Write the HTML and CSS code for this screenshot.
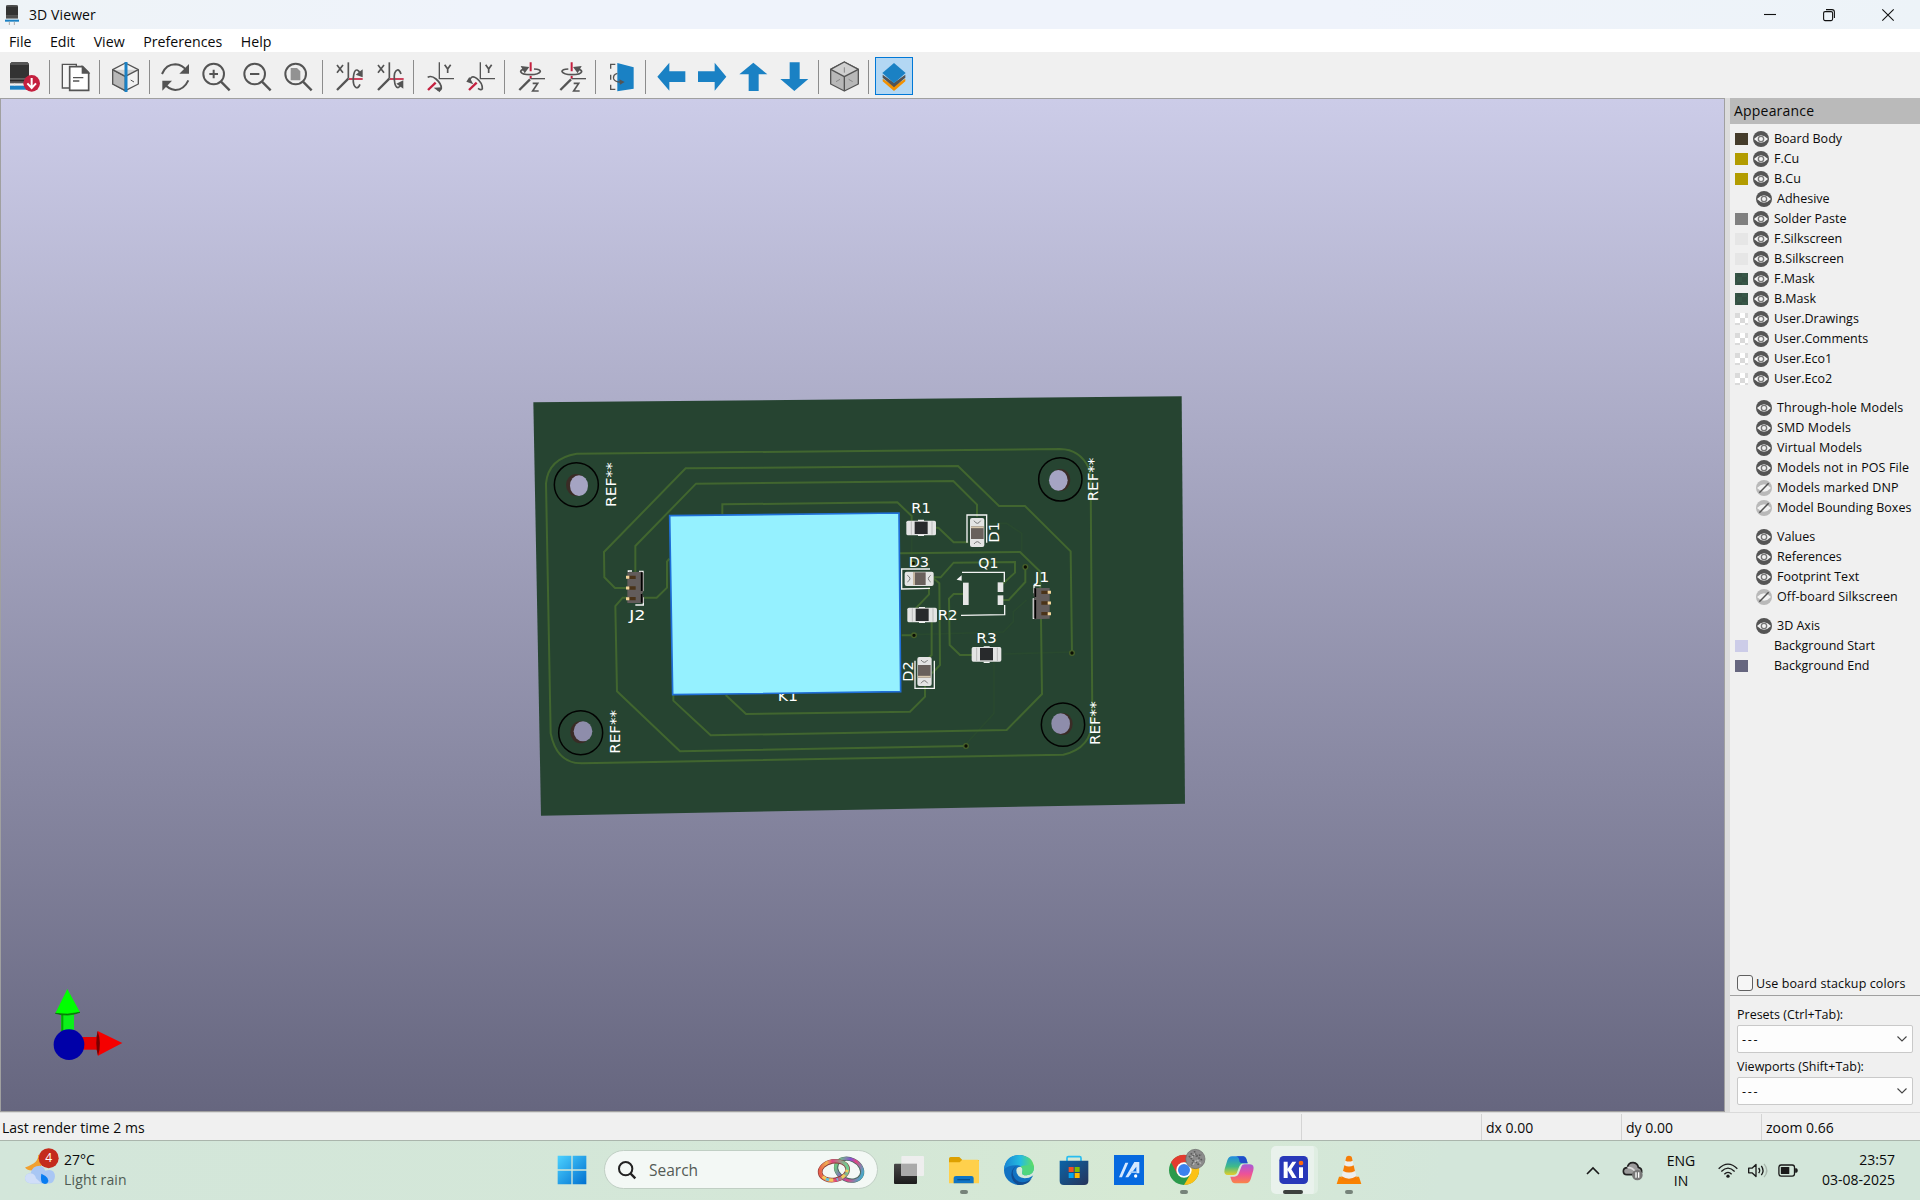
FILE: index.html
```html
<!DOCTYPE html>
<html lang="en">
<head>
<meta charset="utf-8">
<title>3D Viewer</title>
<link rel="stylesheet" href="styles.css">
</head>
<body>
<svg class="defs" width="0" height="0">
  <symbol id="eye" viewBox="0 0 48 48"><circle cx="24" cy="24" r="24" fill="#545454"/><path d="M3 24Q24 2 45 24Q24 46 3 24Z" fill="#f2f2f2"/><circle cx="24" cy="24" r="8" fill="#f2f2f2" stroke="#777" stroke-width="4"/></symbol>
  <symbol id="off" viewBox="0 0 48 48"><circle cx="24" cy="24" r="24" fill="#b9b9b9"/><path d="M3 24Q24 2 45 24Q24 46 3 24Z" fill="#f2f2f2"/><path d="M10 38L38 10" stroke="#545454" stroke-width="4.5"/></symbol>
  <symbol id="lens" viewBox="0 0 90 90"><circle cx="38" cy="36" r="31" fill="none" stroke="#545454" stroke-width="6"/><path d="M60 59L86 85" stroke="#545454" stroke-width="7"/></symbol>
</svg>
<header class="title">
  <svg class="app" viewBox="0 0 42 60"><path d="M3 4Q3 0 21 0T39 4V36H3Z" fill="#333"/><path d="M4 1H38V5H4Z" fill="#555"/><path d="M3 31H39V41H3Z" fill="#666"/><path d="M3 36H39" stroke="#222" stroke-width="2"/><path d="M0 44H42V50H0Z" fill="#1a81c4"/><path d="M13 50V60M28 50V60" stroke="#aaa" stroke-width="3"/></svg>
  <span class="name">3D Viewer</span>
  <div class="winbtns">
    <svg viewBox="0 0 12 12"><path d="M0 5.5H12"/></svg>
    <svg viewBox="0 0 12 12"><rect x=".6" y="2.6" width="9" height="9" rx="1.5"/><path d="M3 .6H9Q11.4 .6 11.4 3V9"/></svg>
    <svg viewBox="0 0 12 12"><path d="M.3 .3L11.7 11.7M11.7 .3L.3 11.7"/></svg>
  </div>
</header>
<nav class="menu"><span>File</span><span>Edit</span><span>View</span><span>Preferences</span><span>Help</span></nav>
<div class="toolbar">
  <div class="tool"><svg viewBox="0 0 90 90"><path d="M0 5Q0 0 28 0T57 5V50H0Z" fill="#333"/><path d="M4 0H53L57 9H0Z" fill="#555"/><path d="M0 51H50V64H0Z" fill="#555"/><path d="M0 56H50" stroke="#222" stroke-width="3"/><path d="M0 71H48V83H0Z" fill="#1a81c4"/><path d="M14 64V71M40 64V71" stroke="#ddd" stroke-width="3"/><circle cx="65" cy="64" r="25" fill="#c4203f"/><path d="M65 48V76M52 64L65 78L78 64" fill="none" stroke="#fff" stroke-width="6"/></svg></div>
  <i></i>
  <div class="tool"><svg viewBox="0 0 90 90" fill="#f5f5f5" stroke="#545454" stroke-width="4"><path d="M7 7H49V78H7Z"/><path d="M29 14H68L86 32V85H29Z" fill="#fff" stroke-width="5"/><path d="M67 14V33H86Z" fill="#545454"/><path d="M39 47H70M39 57H58" fill="none"/></svg></div>
  <i></i>
  <div class="tool"><svg viewBox="0 0 90 90" stroke="#545454" stroke-width="4" stroke-linejoin="round"><path d="M46 3L85 23V66L46 86L8 66V23Z" fill="#f2f2f2"/><path d="M8 23L46 43V86L8 66Z" fill="#b8b8b8"/><path d="M8 23L46 43L85 23" fill="#d2d2d2"/><path d="M62 54L72 60" stroke-width="3"/><path d="M48 0V90" stroke="#1a81c4" stroke-width="9"/></svg></div>
  <i></i>
  <div class="tool"><svg viewBox="0 0 90 90" fill="none" stroke="#545454" stroke-width="6"><path d="M6 36Q18 7 46 7Q68 8 80 27"/><path d="M87 6V35H58Z" fill="#545454" stroke="none"/><path d="M85 55Q72 83 46 84Q24 81 13 64"/><path d="M7 86V56H36Z" fill="#545454" stroke="none"/></svg></div>
  <div class="tool"><svg viewBox="0 0 90 90"><use href="#lens"/><path d="M38 23V49M25 36H51" stroke="#545454" stroke-width="6"/></svg></div>
  <div class="tool"><svg viewBox="0 0 90 90"><use href="#lens"/><path d="M24 36H52" stroke="#545454" stroke-width="6"/></svg></div>
  <div class="tool"><svg viewBox="0 0 90 90"><use href="#lens"/><path d="M23 18H42L52 28V55H23Z" fill="#929292"/></svg></div>
  <i></i>
  <div class="tool"><svg class="rot" viewBox="0 0 90 90"><path d="M12 9L30 32M30 9L12 32" stroke-width="5"/><path d="M46 1V50" stroke-width="5"/><path class="red" d="M48 51H89"/><path d="M46 50L12 84" stroke-width="7"/><path d="M81 67Q76 79 70 77Q59 72 61 47Q63 23 72 24Q78 25 81 35"/><path class="fill" d="M89 22V46L68 38Z"/></svg></div>
  <div class="tool"><svg class="rot" viewBox="0 0 90 90"><path d="M12 9L30 32M30 9L12 32" stroke-width="5"/><path d="M46 1V50" stroke-width="5"/><path class="red" d="M48 51H89"/><path d="M46 50L12 84" stroke-width="7"/><path d="M81 36Q76 22 70 24Q59 28 61 53Q63 77 72 77Q78 76 81 67"/><path class="fill" d="M88 80V55L67 65Z"/></svg></div>
  <i></i>
  <div class="tool"><svg class="rot" viewBox="0 0 90 90"><path d="M62 8L71 21L80 8M71 20V33" stroke-width="5"/><path d="M46 1V50H90" stroke-width="4"/><path class="red" d="M12 84L35 62" stroke-width="7"/><path d="M11 46Q22 39 36 51Q53 66 52 79Q50 87 41 84"/><path class="fill" d="M29 77L54 76L47 91Z"/></svg></div>
  <div class="tool"><svg class="rot" viewBox="0 0 90 90"><path d="M62 8L71 21L80 8M71 20V33" stroke-width="5"/><path d="M46 1V50H90" stroke-width="4"/><path class="red" d="M12 84L35 62" stroke-width="7"/><path d="M13 58Q18 37 35 49Q53 63 52 80Q48 86 39 79"/><path class="fill" d="M4 59L13 45L25 67Z"/></svg></div>
  <i></i>
  <div class="tool"><svg class="rot" viewBox="0 0 90 90"><path d="M53 64H68L53 87H71" stroke-width="5"/><path class="red" d="M47 1V28M47 42V50" stroke-width="6"/><path d="M47 50H90" stroke-width="4"/><path d="M45 52L13 84" stroke-width="7"/><path d="M57 21Q77 22 76 29Q71 38 47 38Q20 38 17 29Q17 23 28 22"/><path class="fill" d="M17 12L43 15L29 34Z"/></svg></div>
  <div class="tool"><svg class="rot" viewBox="0 0 90 90"><path d="M53 64H68L53 87H71" stroke-width="5"/><path class="red" d="M47 1V28M47 42V50" stroke-width="6"/><path d="M47 50H90" stroke-width="4"/><path d="M45 52L13 84" stroke-width="7"/><path d="M37 21Q17 22 18 29Q23 38 47 38Q74 38 77 29Q77 23 66 22"/><path class="fill" d="M77 12L51 15L65 34Z"/></svg></div>
  <i></i>
  <div class="tool"><svg class="rot" viewBox="0 0 90 90"><path d="M28 7H14V20M14 38V53M14 68V82H28" stroke-width="4"/><path d="M34 3L83 16V80L34 88Z" fill="#1a81c4" stroke="none"/><path d="M34 34Q20 38 23 51Q28 60 42 60" stroke-width="4"/><path class="fill" d="M40 52L56 60L42 68Z"/></svg></div>
  <i></i>
  <div class="tool"><svg class="arrow" viewBox="0 0 90 90"><path d="M4 44L40 2V28H88V60H40V86Z"/></svg></div>
  <div class="tool"><svg class="arrow" viewBox="0 0 90 90"><path d="M88 44L53 2V28H3V60H53V86Z"/></svg></div>
  <div class="tool"><svg class="arrow" viewBox="0 0 90 90"><path d="M46 2L88 37H62V87H32V37H4Z"/></svg></div>
  <div class="tool"><svg class="arrow" viewBox="0 0 90 90"><path d="M46 87L88 51H62V1H32V51H4Z"/></svg></div>
  <i></i>
  <div class="tool"><svg viewBox="0 0 90 90" stroke="#545454" stroke-width="4" stroke-linejoin="round"><path d="M46 0L88 22V66L46 87L5 66V22Z" fill="#b8b8b8"/><path d="M5 22L46 0L88 22L46 44Z" fill="#d0d0d0"/><path d="M46 44V87"/><path d="M46 16V32M21 59L33 52M71 59L59 52" stroke="#888" stroke-width="3"/></svg></div>
  <i></i>
  <div class="tool active"><svg viewBox="0 0 90 90"><path d="M11 50L45 72L79 50V58L45 87L11 58Z" fill="#f29100"/><path d="M11 38L45 62L79 38V47L45 76L11 47Z" fill="#545454"/><path d="M45 3L80 33L45 64L10 33Z" fill="#1a81c4"/></svg></div>
</div>
<main>
  <section class="canvas">
    <svg viewBox="1 99 1723 1012" width="1723" height="1012">
      <g transform="translate(520 380) scale(.33333)">
        <path d="M40 67L1985 49L1995 1271L63 1307Z" fill="#264431"/>
        <g class="faint"><path d="M1422 845V1000L1338 1092M1450 822L1656 816M1180 764L1450 756L1480 725V695L1520 660M1410 430H1460L1505 460V520M1175 470V560"/></g>
        <g class="track">
          <path d="M170 221L1620 207Q1680 208 1707 265Q1712 280 1712 300L1717 1020Q1715 1105 1630 1124L185 1150Q110 1150 92 1060L78 310Q85 235 170 221Z"/>
          <path d="M323 624H285L253 592L252 516L497 265L1314 258L1437 378H1515L1652 514L1656 819"/>
          <path d="M346 576V498L528 311L1300 303L1371 374V410"/>
          <path d="M607 402V373L1132 367L1175 408V425"/>
          <path d="M368 653H410L441 623V545L448 536"/>
          <path d="M323 653H308L286 678L291 934L480 1114L1338 1098"/>
          <path d="M460 945V962L572 1066L1460 1050L1566 942L1563 715"/>
          <path d="M617 945L678 1002L1170 995L1215 950V915"/>
          <path d="M1245 443H1255L1301 487H1345"/>
          <path d="M1140 520L1500 516L1561 575V625"/>
          <path d="M1240 592H1262L1301 548L1485 546V578L1445 614"/>
          <path d="M1516 561V606L1466 660H1445"/>
          <path d="M1330 642H1301L1287 656L1289 795L1320 825H1360"/>
          <path d="M1240 595L1258 610L1260 855L1236 880"/>
          <path d="M1227 622V643L1187 685M1235 720V825L1225 835M1145 766H1180"/>
        </g>
        <g fill="#0c0e04" stroke="#47602a" stroke-width="4"><circle cx="1516" cy="561" r="7"/><circle cx="1656" cy="819" r="7"/><circle cx="1338" cy="1098" r="7"/><circle cx="1182" cy="766" r="7"/><circle cx="1180" cy="550" r="7"/></g>
        <g class="ring"><circle cx="169" cy="314" r="66"/><circle cx="182" cy="1058" r="66"/><circle cx="1621" cy="298" r="65"/><circle cx="1629" cy="1034" r="65"/></g>
        <g fill="#3a2c26"><ellipse cx="169" cy="315" rx="31" ry="33"/><ellipse cx="181" cy="1057" rx="30" ry="33"/><ellipse cx="1621" cy="300" rx="30" ry="33"/><ellipse cx="1628" cy="1032" rx="30" ry="33"/></g>
        <g fill="#a5a4c3"><ellipse cx="177" cy="317" rx="27" ry="31"/><ellipse cx="1615" cy="301" rx="28" ry="31"/></g>
        <g fill="#8e8dab"><ellipse cx="189" cy="1054" rx="28" ry="30"/><ellipse cx="1622" cy="1031" rx="28" ry="31"/></g>
        <g class="silk">
          <path d="M325 576V573H336M357 574H369V633M370 652V675H346"/>
          <path d="M1341 488V405H1400V488"/>
          <path d="M1230 567H1145V627L1230 625"/>
          <path d="M1185 842V925H1243V842"/>
          <path d="M1326 577H1453V606M1323 706L1454 704V675"/>
          <path d="M1562 617H1542V640M1540 655V715H1553"/>
          <path d="M1194 421H1212M1194 466H1212M1197 683H1215M1197 727H1215M1391 801H1409M1391 847H1409"/>
          <path d="M1314 598L1323 590V600Z" fill="#fff"/>
        </g>
        <g fill="#e6e6e6"><rect x="1329" y="608" width="17" height="67"/><rect x="1433" y="607" width="17" height="29"/><rect x="1433" y="646" width="17" height="29"/></g>
        <g>
          <g id="res"><rect x="1159" y="422" width="89" height="44" rx="5" fill="#e4e4e4"/><rect x="1184" y="425" width="39" height="37" fill="#282a2c"/><path d="M1174 424V464M1236 424V464" stroke="#bbb" stroke-width="3"/></g>
          <use href="#res" x="3" y="261"/><use href="#res" x="196" y="379"/>
        </g>
        <g id="dio"><rect x="1350" y="414" width="43" height="87" rx="6" fill="#e4e4e4"/><rect x="1353" y="439" width="38" height="38" fill="#69605c"/><path d="M1353 442H1391" stroke="#d8c8ae" stroke-width="5"/><path d="M1362 422Q1372 438 1382 422M1362 492Q1372 478 1382 492" fill="none" stroke="#777" stroke-width="3"/></g>
        <use href="#dio" transform="rotate(180 1292.5 666)"/>
        <use href="#dio" transform="translate(740 1968) rotate(-90)"/>
        <g id="conn"><path d="M322 577L366 575L370 580V636L366 640L370 645V669H322Z" fill="#625c5b"/><path d="M365 577V633M365 642V668" stroke="#000" stroke-width="5"/><path d="M327 592H347M327 624H347M327 656H347" stroke="#4a3319" stroke-width="10"/><path d="M318 592H328M318 624H328M318 656H328" stroke="#f2d49a" stroke-width="9"/></g>
        <use href="#conn" transform="rotate(180 955.5 646.5)"/>
        <g class="ref">
          <text x="1174" y="400" textLength="58" lengthAdjust="spacingAndGlyphs">R1</text><text x="1166" y="562" textLength="61" lengthAdjust="spacingAndGlyphs">D3</text><text x="1375" y="565" textLength="60" lengthAdjust="spacingAndGlyphs">Q1</text><text x="1253" y="720" textLength="60" lengthAdjust="spacingAndGlyphs">R2</text><text x="1369" y="789" textLength="61" lengthAdjust="spacingAndGlyphs">R3</text><text x="1544" y="606" textLength="44" lengthAdjust="spacingAndGlyphs">J1</text><text x="328" y="719" textLength="48" lengthAdjust="spacingAndGlyphs">J2</text><text x="773" y="963" textLength="61" lengthAdjust="spacingAndGlyphs">K1</text>
          <text transform="translate(1438 488) rotate(-90)" textLength="62" lengthAdjust="spacingAndGlyphs">D1</text>
          <text transform="translate(1178 905) rotate(-90)" textLength="61" lengthAdjust="spacingAndGlyphs">D2</text>
          <text transform="translate(287 381) rotate(-90)" textLength="134" lengthAdjust="spacingAndGlyphs">REF**</text>
          <text transform="translate(299 1121) rotate(-90)" textLength="131" lengthAdjust="spacingAndGlyphs">REF**</text>
          <text transform="translate(1733 364) rotate(-90)" textLength="131" lengthAdjust="spacingAndGlyphs">REF**</text>
          <text transform="translate(1740 1095) rotate(-90)" textLength="131" lengthAdjust="spacingAndGlyphs">REF**</text>
        </g>
        <path d="M449 407L1137 399L1142 935L458 944Z" fill="#95f1ff" stroke="#1f6fd8" stroke-width="5"/>
      </g>
      <g transform="translate(0 970) scale(.33333)">
        <path d="M184 125H222V190H184Z" fill="#0cf01a"/><path d="M184 125H190V190H184Z" fill="#0a0"/><path d="M202 57L240 127Q203 142 166 130Z" fill="#0f0"/><path d="M166 130Q203 142 240 127Q203 136 166 130" fill="#096b09" stroke="#096b09" stroke-width="2"/>
        <path d="M245 201H295V239H245Z" fill="#e60000"/><path d="M293 183L367 219L294 257Q284 220 293 183Z" fill="#f50000"/><path d="M293 183Q306 220 294 257Q284 220 293 183Z" fill="#700"/>
        <circle cx="207" cy="224" r="46" fill="#0000a8"/>
      </g>
    </svg>
  </section>
  <aside>
    <h2>Appearance</h2>
    <div class="rows">
      <div class="row"><b class="body"></b><svg><use href="#eye"/></svg>Board Body</div>
      <div class="row"><b class="cu"></b><svg><use href="#eye"/></svg>F.Cu</div>
      <div class="row"><b class="cu"></b><svg><use href="#eye"/></svg>B.Cu</div>
      <div class="row in"><svg><use href="#eye"/></svg>Adhesive</div>
      <div class="row"><b class="paste"></b><svg><use href="#eye"/></svg>Solder Paste</div>
      <div class="row"><b class="silkc"></b><svg><use href="#eye"/></svg>F.Silkscreen</div>
      <div class="row"><b class="silkc"></b><svg><use href="#eye"/></svg>B.Silkscreen</div>
      <div class="row"><b class="mask"></b><svg><use href="#eye"/></svg>F.Mask</div>
      <div class="row"><b class="mask"></b><svg><use href="#eye"/></svg>B.Mask</div>
      <div class="row"><b class="chk"></b><svg><use href="#eye"/></svg>User.Drawings</div>
      <div class="row"><b class="chk"></b><svg><use href="#eye"/></svg>User.Comments</div>
      <div class="row"><b class="chk"></b><svg><use href="#eye"/></svg>User.Eco1</div>
      <div class="row"><b class="chk"></b><svg><use href="#eye"/></svg>User.Eco2</div>
    </div>
    <div class="rows">
      <div class="row in wide"><svg><use href="#eye"/></svg>Through-hole Models</div>
      <div class="row in wide"><svg><use href="#eye"/></svg>SMD Models</div>
      <div class="row in wide"><svg><use href="#eye"/></svg>Virtual Models</div>
      <div class="row in wide"><svg><use href="#eye"/></svg>Models not in POS File</div>
      <div class="row in wide"><svg><use href="#off"/></svg>Models marked DNP</div>
      <div class="row in"><svg><use href="#off"/></svg>Model Bounding Boxes</div>
    </div>
    <div class="rows">
      <div class="row in"><svg><use href="#eye"/></svg>Values</div>
      <div class="row in"><svg><use href="#eye"/></svg>References</div>
      <div class="row in"><svg><use href="#eye"/></svg>Footprint Text</div>
      <div class="row in wide"><svg><use href="#off"/></svg>Off-board Silkscreen</div>
    </div>
    <div class="rows">
      <div class="row in"><svg><use href="#eye"/></svg>3D Axis</div>
      <div class="row"><b class="bgs"></b><svg></svg>Background Start</div>
      <div class="row"><b class="bge"></b><svg></svg>Background End</div>
    </div>
    <div class="bottom">
      <label class="check"><span class="box"></span>Use board stackup colors</label>
      <div class="presets">
        <p>Presets (Ctrl+Tab):</p>
        <div class="select">---<svg viewBox="0 0 10 6"><path d="M.5 .5L5 5L9.500 .5"/></svg></div>
        <p>Viewports (Shift+Tab):</p>
        <div class="select">---<svg viewBox="0 0 10 6"><path d="M.5 .5L5 5L9.500 .5"/></svg></div>
      </div>
    </div>
  </aside>
</main>
<div class="status"><span class="msg">Last render time 2 ms</span><span class="blank"></span><span class="cell">dx 0.00</span><span class="cell">dy 0.00</span><span class="last">zoom 0.66</span></div>
<footer>
  <div class="weather">
    <svg viewBox="0 0 102 110"><path d="M39 20Q43 44 0 58Q7 68 24 67Q54 64 52 35Q50 24 39 20Z" fill="#f0a030"/><path d="M18 106Q0 104 0 89Q2 75 17 75Q22 53 44 53Q56 54 61 68Q88 59 90 85Q88 105 72 106Z" fill="#a9c7f4"/><path d="M18 106Q0 104 0 89Q2 75 17 75Q30 76 33 90L50 106Z" fill="#d0def8"/><path d="M49 77Q78 90 67 105Q59 110 51 104Q46 96 49 77Z" fill="#087cf0"/><circle cx="71" cy="30" r="30" fill="#c42b1c"/><text x="71" y="43" text-anchor="middle" class="badge">4</text></svg>
    <div><div>27°C</div><div class="sub">Light rain</div></div>
  </div>
  <div class="apps">
    <div class="app1"><svg class="ic" viewBox="0 0 90 90"><defs><linearGradient id="win" x2="1" y2="1"><stop stop-color="#4dd2ff"/><stop offset="1" stop-color="#0070d0"/></linearGradient></defs><path d="M2 2H43V43H2ZM47 2H88V43H47ZM2 47H43V88H2ZM47 47H88V88H47Z" fill="url(#win)"/></svg></div>
    <div class="search">
      <svg class="mag" viewBox="0 0 54 54"><circle cx="23" cy="23" r="20" fill="none" stroke="#222" stroke-width="6"/><path d="M38 38L52 52" stroke="#222" stroke-width="7"/></svg>
      <span>Search</span>
      <svg class="bands" viewBox="0 0 142 78" fill="none"><defs><linearGradient id="rb1"><stop stop-color="#e8604c"/><stop offset=".3" stop-color="#f0b050"/><stop offset=".5" stop-color="#e04580"/><stop offset="1" stop-color="#6fcf90"/></linearGradient><linearGradient id="rb2"><stop stop-color="#70c880"/><stop offset=".4" stop-color="#8a50d0"/><stop offset=".6" stop-color="#e04580"/><stop offset="1" stop-color="#4ba8c8"/></linearGradient></defs><ellipse cx="94" cy="38" rx="41" ry="31" transform="rotate(25 94 38)" stroke="#4a6a60" stroke-width="13"/><ellipse cx="94" cy="38" rx="42" ry="32" transform="rotate(25 94 38)" stroke="url(#rb2)" stroke-width="9"/><ellipse cx="48" cy="41" rx="42" ry="28" transform="rotate(-10 48 41)" stroke="#8b3a38" stroke-width="14"/><ellipse cx="48" cy="41" rx="42" ry="29" transform="rotate(-10 48 41)" stroke="url(#rb1)" stroke-width="10"/><path d="M14 59Q30 71 50 69M72 62Q85 53 88 38" stroke="#f2c95a" stroke-width="9" stroke-dasharray="12 10"/><path d="M24 66Q45 73 60 66" stroke="#58c6e8" stroke-width="8" stroke-dasharray="9 24"/></svg>
    </div>
    <div class="slot"><svg class="ic" viewBox="0 0 90 90"><defs><linearGradient id="tv" x2="0" y2="1"><stop stop-color="#484848"/><stop offset="1" stop-color="#1c1c1c"/></linearGradient></defs><rect x="0" y="26" width="69" height="61" rx="3" fill="url(#tv)"/><rect x="22" y="3" width="68" height="60" rx="3" fill="#eee"/><path d="M22 26H69V63H22Z" fill="#aaa"/></svg></div>
    <div class="slot run"><svg class="ic" viewBox="0 0 90 90"><path d="M0 11Q0 6 5 6H31L40 15H90V40H0Z" fill="#dda000"/><path d="M0 22H32L40 14H86Q90 14 90 19V85H0Z" fill="#ffd04c"/><path d="M14 85V69Q14 63 21 63H67Q74 63 74 69V85Z" fill="#1075c5"/><path d="M25 74H63" stroke="#07508f" stroke-width="4"/></svg></div>
    <div class="slot"><svg class="ic" viewBox="0 0 90 90"><defs><linearGradient id="e1"><stop stop-color="#1784d4"/><stop offset=".55" stop-color="#25bde0"/><stop offset="1" stop-color="#63df5c"/></linearGradient></defs><circle cx="45" cy="45" r="45" fill="#1272c2"/><path d="M0 43Q4 0 47 0Q87 3 90 37Q90 58 68 61Q51 61 55 50Q58 34 42 31Q14 29 0 43Z" fill="url(#e1)"/><path d="M37 33Q18 50 32 70Q47 89 72 78L83 71Q71 90 45 90Q24 84 22 60Q22 42 37 33Z" fill="#124c91"/><path d="M37 46Q37 67 62 70Q76 70 85 63L95 55V38L90 37Q90 58 68 61Q51 61 55 50Q58 38 50 35Q37 35 37 46Z" fill="#d5e8da"/><path d="M50 33Q91 27 90 38Q90 58 68 61Q51 61 55 50Q57 40 50 33Z" fill="#50d67d"/></svg></div>
    <div class="slot"><svg class="ic" viewBox="0 0 90 90"><defs><linearGradient id="st" x2="1" y2="1"><stop stop-color="#0b64a8"/><stop offset="1" stop-color="#26345a"/></linearGradient></defs><path d="M24 20V9Q24 5 28 5H62Q66 5 66 9V20" fill="none" stroke="#29bdf0" stroke-width="5"/><path d="M2 17H88V78Q88 90 76 90H14Q2 90 2 78Z" fill="url(#st)"/><path d="M29 36H44V51H29Z" fill="#f25022"/><path d="M47 36H62V51H47Z" fill="#7fba00"/><path d="M29 54H44V69H29Z" fill="#00a4ef"/><path d="M47 54H62V69H47Z" fill="#ffb900"/></svg></div>
    <div class="slot"><svg class="ic" viewBox="0 0 90 90"><path d="M0 0H90V90H0Z" fill="#0669df"/><path d="M15 67L34 23H43L24 67ZM34 67L61 21H76V55H67V35L43 67Z" fill="#d5e8ff"/><path d="M52 49H68V54H48Z" fill="#9cc7f7"/><circle cx="65" cy="63" r="5" fill="#fff"/></svg></div>
    <div class="slot run"><svg class="ic" viewBox="0 0 90 90"><circle cx="45" cy="45" r="45" fill="#2b9a4b"/><path d="M6 22A45 45 0 0 1 84 22H45V45L25 57Z" fill="#e33b2e"/><path d="M84 22A45 45 0 0 1 45 90L65 56L55 22Z" fill="#fbc116"/><circle cx="45" cy="45" r="23" fill="#fff"/><circle cx="45" cy="45" r="18" fill="#3b82ee"/><circle cx="79" cy="12" r="29" fill="#8c8c8c" stroke="#666" stroke-width="2"/><path d="M60 3L73 18L67 31M76 -12L82 3L98 -1M80 20L90 30M65 -5L76 5M88 8L102 17" stroke="#5c5c5c" stroke-width="5" stroke-dasharray="5 3" fill="none"/><path d="M68 8L78 -4M72 29L84 14L96 26" stroke="#bbb" stroke-width="4" stroke-dasharray="6 4" fill="none"/></svg></div>
    <div class="slot"><svg class="ic" viewBox="0 0 90 90"><defs><linearGradient id="c1" x2="0" y2="1"><stop stop-color="#208be0"/><stop offset=".55" stop-color="#40bb88"/><stop offset="1" stop-color="#e6ce28"/></linearGradient><linearGradient id="c2" x2="0" y2="1"><stop stop-color="#a75ad8"/><stop offset=".5" stop-color="#ed5199"/><stop offset="1" stop-color="#fa8546"/></linearGradient></defs><path d="M24 4H57Q65 4 68 15L71 25H59Q48 25 44 39L38 55Q36 60 28 60H12Q-2 60 2 42L10 16Q14 4 24 4Z" fill="url(#c1)"/><path d="M35 4H57Q65 4 68 15L71 25H58Q45 25 46 15Q44 5 35 4Z" fill="#204dca"/><path d="M66 85H33Q25 85 22 75L19 65H31Q42 65 46 51L52 35Q54 28 62 28H78Q92 28 88 46L80 73Q76 85 66 85Z" fill="url(#c2)"/></svg></div>
    <div class="slot run ki"><svg class="ic" viewBox="0 0 90 90"><rect x="4" y="3" width="86" height="84" rx="13" fill="#2838b9"/><path d="M17 20H29V41L43 20H55L40 43L56 69H43L29 46V69H17ZM63 37H75V69H63Z" fill="#fff"/><circle cx="69" cy="24" r="7" fill="#ff680a"/></svg></div>
    <div class="slot run"><svg class="ic" viewBox="0 0 90 90"><path d="M15 65H75L82 87H8Z" fill="#f98200"/><path d="M37 5Q45-1 53 5L68 68Q45 84 22 68Z" fill="#eee"/><path d="M37 5Q45-1 53 5L56 17Q45 22 34 17ZM31 31Q45 38 59 31L63 48Q45 57 27 48ZM23 64Q45 78 67 64L70 73Q45 85 20 73Z" fill="#f57d08"/></svg></div>
  </div>
  <div class="tray">
    <svg class="chev" viewBox="0 0 14 10"><path d="M1 8L7 2L13 8"/></svg>
    <svg class="cloud" viewBox="0 0 60 60"><path d="M12 41Q1 41 1 30Q2 20 13 20Q16 4 31 5Q44 7 46 19Q57 21 56 34L48 41Z" fill="#9b9b9b" stroke="#222" stroke-width="5"/><path d="M13 20Q27 18 37 32" stroke="#ddd" stroke-width="5" fill="none"/><circle cx="43" cy="42" r="16" fill="#777"/><path d="M39 34V50M47 34V50" stroke="#fff" stroke-width="4"/></svg>
    <div class="lang"><div>ENG</div><div>IN</div></div>
    <svg class="wifi" viewBox="0 0 60 44" fill="none" stroke="#1a1a1a" stroke-width="4"><path d="M2 17Q30-11 58 17M10 25Q30 5 50 25M19 33Q30 22 41 33"/><circle cx="30" cy="39" r="5" fill="#1a1a1a" stroke="none"/></svg>
    <svg class="vol" viewBox="0 0 60 44" fill="none" stroke="#1a1a1a" stroke-width="4"><path d="M2 15H12L24 4V40L12 29H2Z" stroke-linejoin="round"/><path d="M32 14Q38 22 32 30M40 8Q50 22 40 36"/><path d="M48 2Q65 22 48 42" stroke="#aab8ae"/></svg>
    <svg class="bat" viewBox="0 0 60 40"><rect x="2" y="3" width="48" height="34" rx="7" fill="none" stroke="#1a1a1a" stroke-width="4"/><rect x="8" y="9" width="26" height="22" rx="2" fill="#1a1a1a"/><path d="M52 13H56Q60 14 60 20T56 27H52Z" fill="#1a1a1a"/></svg>
    <div class="clock"><div>23:57</div><div>03-08-2025</div></div>
  </div>
</footer>
</body>
</html>
```
FILE: styles.css
```css
* { box-sizing: border-box; }
body { margin: 0; width: 1920px; height: 1200px; overflow: hidden; display: flex; flex-direction: column; font: 14px "Open Sans", "Noto Sans", sans-serif; color: #0a0a0a; background: #f0f0f0; }
svg { display: block; flex: none; overflow: visible; }
.defs { position: absolute; }
.title { height: 29px; flex: none; display: flex; align-items: center; padding-left: 5px; background: linear-gradient(90deg, #eef3f7, #eff3fb 25%, #eff3fb 70%, #edf3f8); }
.title .app { width: 14px; height: 20px; margin-right: 10px; }
.title .name { font-size: 14px; letter-spacing: .1px; line-height: 20px; }
.winbtns { margin-left: auto; display: flex; gap: 47px; padding-right: 26px; }
.winbtns svg { width: 12px; height: 12px; fill: none; stroke: #111; stroke-width: 1.1; }
.menu { height: 23px; flex: none; display: flex; align-items: center; gap: 18.500px; padding: 2px 0 0 9px; background: #fff; line-height: 20px; font-size: 14.200px; }
.toolbar { height: 46px; flex: none; display: flex; align-items: center; padding: 2px 0 0 4px; }
.tool { width: 41px; height: 38px; display: flex; align-items: center; justify-content: center; }
.tool svg { width: 30px; height: 30px; margin-top: 1px; }
.toolbar i { width: 1px; height: 34px; margin: 1px 4px 0; background: #8c8c8c; }
.tool.active { width: 38px; margin-left: 2px; background: #b3d7f3; border: 1px solid #0078d7; }
.rot { fill: none; stroke: #545454; stroke-width: 5; }
.rot .red { stroke: #c4203f; }
.rot .fill { fill: #545454; stroke: none; }
.arrow { fill: #1a81c4; }
main { height: 1014px; flex: none; display: flex; background: #f0f0f0; }
.canvas { width: 1725px; height: 1014px; border: 1px solid #a0a0a0; background: linear-gradient(#cccce8, #66667f); }
.track { fill: none; stroke: #41662f; stroke-width: 6; }
.faint { fill: none; stroke: #29492f; stroke-width: 5; }
.ring { fill: none; stroke: #020302; stroke-width: 4.500; }
.silk { fill: none; stroke: #f4f4f4; stroke-width: 4; }
.ref { fill: #fff; font: 44px "DejaVu Sans", sans-serif; }
aside { width: 195px; border-left: 5px solid #dcdcdc; display: flex; flex-direction: column; font-size: 12.500px; }
aside h2 { margin: 0 0 5px; height: 26px; padding-left: 4px; font: 14px/25px "Open Sans", sans-serif; letter-spacing: .2px; background: #bababa; }
.rows { margin-bottom: 9px; }
.row { height: 20px; display: flex; align-items: center; padding-left: 5px; white-space: nowrap; line-height: 20px; }
.row.in { padding-left: 26px; }
.row.wide { letter-spacing: .1px; }
.row svg { width: 16px; height: 16px; margin-right: 5px; }
.row b { width: 13px; height: 12px; margin-right: 5px; }
.body { margin-bottom: 0; background: #453c2b; }
.cu { background: #b29c00; }
.paste { background: #808080; }
.silkc { background: #e6e6e6; }
.mask { background: conic-gradient(#344f42 25%, #375747 0 50%, #344f42 0 75%, #375747 0) -3px -1px / 10px 10px; }
.chk { background: conic-gradient(#fff 25%, #dadada 0 50%, #fff 0 75%, #dadada 0) -5px -5px / 10px 10px; }
.bgs { background: #cccce8; }
.bge { background: #66667f; }
.bottom { margin-top: auto; }
.check { height: 20px; display: flex; align-items: center; padding-left: 7px; gap: 3px; white-space: nowrap; letter-spacing: .1px; }
.box { width: 16px; height: 16px; border: 1px solid #606060; border-radius: 3px; background: #f6f6f6; }
.presets { margin-top: 2px; border-top: 1px solid #a0a0a0; height: 117px; padding: 9px 7px 0; }
.presets p { margin: 0; height: 20px; line-height: 20px; white-space: nowrap; }
.select { width: 176px; height: 28px; margin-bottom: 4px; border: 1px solid #c9c9c9; border-radius: 2px; background: #fdfdfd; display: flex; align-items: center; justify-content: space-between; padding: 0 5px 0 4px; letter-spacing: 1.700px; }
.select svg { width: 10px; height: 6px; fill: none; stroke: #444; stroke-width: 1.1; }
.status { height: 29px; flex: none; display: flex; align-items: center; border-bottom: 1px solid #aab5ac; border-top: 1px solid #dadada; line-height: 27px; }
.status span { height: 26px; padding-left: 4px; border-left: 1px solid #d4d4d4; }
.status .msg { width: 1301px; padding-left: 2px; border: 0; }
.status .blank { width: 180px; }
.status .cell { width: 140px; }
.status .last { flex: 1; }
footer { height: 59px; flex: none; display: grid; grid-template-columns: 557px 822px 1fr; background: linear-gradient(100deg, #d3e6da, #d4e7d7 45%, #d6e9d4 60%, #d3e6da 75%); line-height: 20px; }
.weather { display: flex; gap: 5px; padding: 8px 0 0 25px; }
.weather > div { padding-top: 1px; }
.weather svg { width: 34px; height: 37px; margin-top: -1px; }
.badge { font: 36px "Open Sans", sans-serif; fill: #fff; }
.sub { color: #4f5b53; letter-spacing: .15px; }
.apps { display: flex; align-items: flex-start; }
.app1 { width: 30px; margin-top: 14px; }
.ic { width: 30px; height: 30px; }
.search { width: 274px; height: 39px; margin: 9px 3px 0 17px; border: 1px solid #c0cfc4; border-radius: 20px; background: #f3f8f5; display: flex; align-items: center; font-size: 15.500px; color: #535b56; padding-left: 13px; }
.mag { width: 18px; height: 18px; margin-right: 13px; }
.bands { width: 47px; height: 26px; margin-left: auto; margin-right: 12px; }
.slot { width: 55px; height: 59px; padding-top: 14px; display: flex; flex-direction: column; align-items: center; }
.run::after { content: ""; width: 8px; height: 4px; margin-top: 5px; border-radius: 2px; background: #76837a; }
.ki { height: 48px; width: 47px; margin: 5px 3px 0 5px; padding-top: 9px; border-radius: 5px; background: #e9f2ec; border-right: 4px solid #dfeee2; }
.ki::after { width: 20px; background: #3c403e; }
.tray { display: flex; align-items: center; padding-left: 207px; }
.tray .chev { width: 14px; height: 10px; fill: none; stroke: #1a1a1a; stroke-width: 1.600; }
.tray .cloud { width: 20px; height: 20px; margin-left: 23px; }
.lang { width: 50px; text-align: center; margin-left: 13px; }
.tray .wifi { width: 20px; height: 15px; margin-left: 12px; }
.tray .vol { width: 20px; height: 15px; margin-left: 10px; }
.tray .bat { width: 20px; height: 13px; margin-left: 10px; }
.clock { margin: -2px 0 0 auto; padding-right: 25px; text-align: right; }
```
